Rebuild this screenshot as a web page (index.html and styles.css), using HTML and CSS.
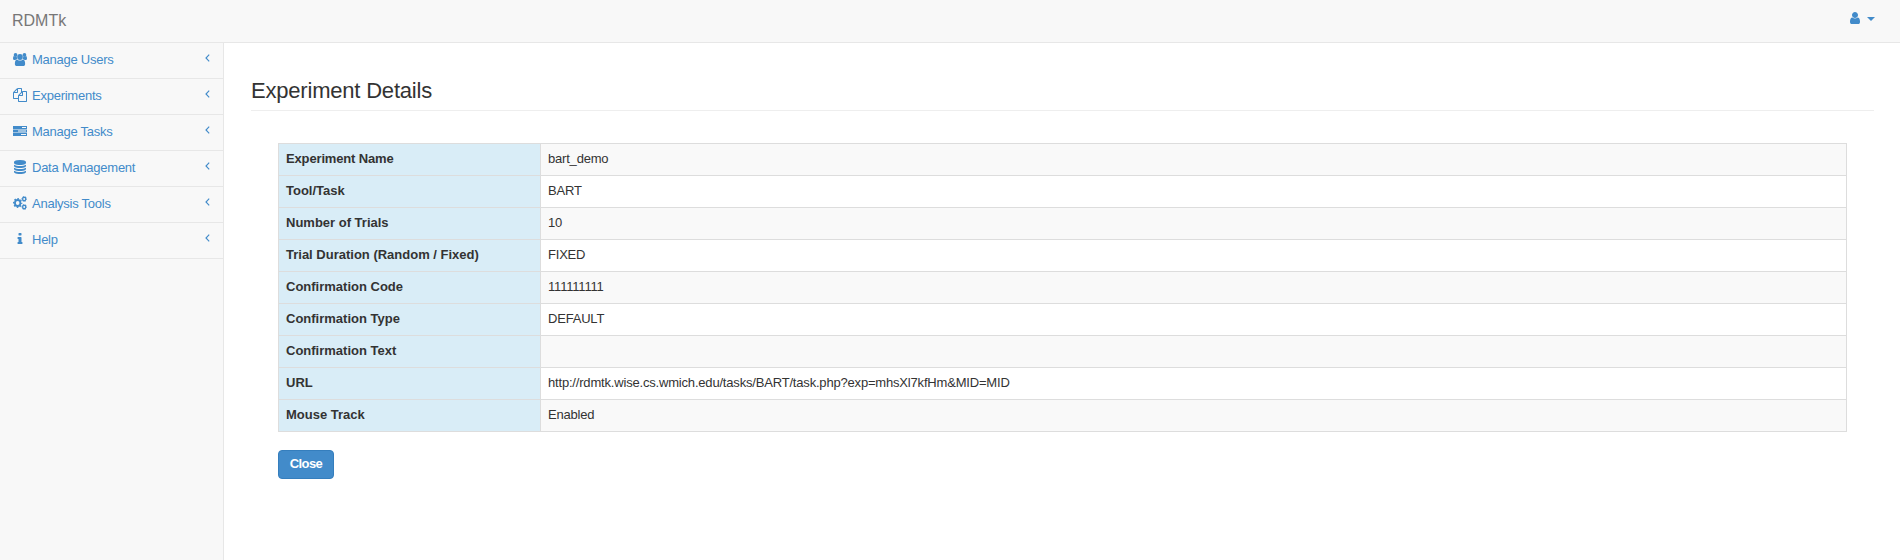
FILE: index.html
```
<!DOCTYPE html>
<html lang="en">
<head>
<meta charset="utf-8">
<title>RDMTk</title>
<link rel="stylesheet" href="styles.css">
</head>
<body>
<svg class="defs" width="0" height="0">
  <symbol id="chevron" viewBox="0 0 5 8"><path d="M4.200.700 1 4l3.200 3.300" fill="none" stroke="currentColor" stroke-width="1.150"/></symbol>
</svg>
<header class="navbar">
  <a class="brand">RDMTk</a>
  <a class="account">
    <svg class="icon-user" viewBox="256 128 1280 1536"><path d="M1536 1399q0 109-62.500 187t-150.500 78h-854q-88 0-150.500-78t-62.500-187q0-85 8.500-160.500t31.500-152 58.500-131 94-89 134.500-34.500q131 128 313 128t313-128q76 0 134.500 34.500t94 89 58.500 131 31.500 152 8.500 160.500zm-256-887q0 159-112.500 271.500t-271.500 112.500-271.500-112.500-112.500-271.500 112.500-271.500 271.500-112.500 271.500 112.500 112.500 271.500z"/></svg>
    <svg class="icon-caret" viewBox="0 0 8 4"><path d="M0 0h8L4 4z"/></svg>
  </a>
</header>
<div class="layout">
  <nav class="sidebar">
    <a class="item">
      <svg class="icon" viewBox="0 0 1920 1792" preserveAspectRatio="none"><circle cx="350" cy="384" r="256"/><circle cx="1570" cy="384" r="256"/><circle cx="960" cy="640" r="384"/><path d="M593 896q-162 5-265 128H194Q0 1020 0 865q0-353 124-353 30 30 115 62t145 32q75 0 149-26-5 42-5 60 0 136 65 256zM1327 896q162 5 265 128h134q194-4 194-159 0-353-124-353-30 30-115 62t-145 32q-75 0-149-26 5 42 5 60 0 136-65 256zM1664 1533q0 120-73 189t-194 70H523q-121 0-194-70t-73-189q0-570 312-573 30 20 84 53 130 75 308 75t308-75q54-33 84-53 312 3 312 573z"/></svg>
      <span class="label">Manage Users</span><svg class="arrow"><use href="#chevron"/></svg>
    </a>
    <a class="item">
      <svg class="icon" viewBox="0 0 1792 1792"><path d="M1696 384q40 0 68 28t28 68v1216q0 40-28 68t-68 28h-960q-40 0-68-28t-28-68v-288h-544q-40 0-68-28t-28-68v-672q0-40 20-88t48-76l408-408q28-28 76-48t88-20h416q40 0 68 28t28 68v328q68-40 128-40h416zm-544 213l-299 299h299v-299zm-640-384l-299 299h299v-299zm196 647l316-316v-416h-384v416q0 40-28 68t-68 28h-416v640h512v-256q0-40 20-88t48-76zm956 804v-1152h-384v416q0 40-28 68t-68 28h-416v640h896z"/></svg>
      <span class="label">Experiments</span><svg class="arrow"><use href="#chevron"/></svg>
    </a>
    <a class="item">
      <svg class="icon" viewBox="0 0 14 14"><path fill-rule="evenodd" d="M0 2h14v3H0zM9 3v1h4V3zM0 5.500h14v3H0zM5 6.500v1h8v-1zM0 9h14v3H0zM8 10v1h5v-1z"/></svg>
      <span class="label">Manage Tasks</span><svg class="arrow"><use href="#chevron"/></svg>
    </a>
    <a class="item">
      <svg class="icon" viewBox="0 0 1792 1792"><path d="M896 768q237 0 443-43t325-127v170q0 69-103 128t-280 93.500-385 34.500-385-34.500-280-93.500-103-128v-170q119 84 325 127t443 43zm0 768q237 0 443-43t325-127v170q0 69-103 128t-280 93.500-385 34.500-385-34.500-280-93.500-103-128v-170q119 84 325 127t443 43zm0-384q237 0 443-43t325-127v170q0 69-103 128t-280 93.500-385 34.500-385-34.500-280-93.500-103-128v-170q119 84 325 127t443 43zm0-1152q208 0 385 34.500t280 93.500 103 128v128q0 69-103 128t-280 93.500-385 34.500-385-34.500-280-93.500-103-128v-128q0-69 103-128t280-93.500 385-34.500z"/></svg>
      <span class="label">Data Management</span><svg class="arrow"><use href="#chevron"/></svg>
    </a>
    <a class="item">
      <svg class="icon" viewBox="0 0 1920 1792" preserveAspectRatio="none"><g fill="none" stroke="currentColor"><circle cx="640" cy="896" r="375" stroke-width="250"/><circle cx="640" cy="896" r="550" stroke-width="180" stroke-dasharray="216" stroke-dashoffset="108"/><circle cx="1536" cy="384" r="220" stroke-width="180"/><circle cx="1536" cy="384" r="320" stroke-width="120" stroke-dasharray="167.500" stroke-dashoffset="84"/><circle cx="1536" cy="1408" r="220" stroke-width="180"/><circle cx="1536" cy="1408" r="320" stroke-width="120" stroke-dasharray="167.500" stroke-dashoffset="84"/></g></svg>
      <span class="label">Analysis Tools</span><svg class="arrow"><use href="#chevron"/></svg>
    </a>
    <a class="item">
      <svg class="icon" viewBox="0 0 1792 1792"><path d="M1216 1344v128q0 26-19 45t-45 19h-512q-26 0-45-19t-19-45v-128q0-26 19-45t45-19h64v-384h-64q-26 0-45-19t-19-45v-128q0-26 19-45t45-19h384q26 0 45 19t19 45v576h64q26 0 45 19t19 45zm-128-1152v192q0 26-19 45t-45 19h-256q-26 0-45-19t-19-45v-192q0-26 19-45t45-19h256q26 0 45 19t19 45z"/></svg>
      <span class="label">Help</span><svg class="arrow"><use href="#chevron"/></svg>
    </a>
  </nav>
  <main class="content">
    <h1 class="title">Experiment Details</h1>
    <section class="panel">
      <table class="details">
        <tr><th class="tight">Experiment Name</th><td>bart_demo</td></tr>
        <tr><th>Tool/Task</th><td>BART</td></tr>
        <tr><th>Number of Trials</th><td>10</td></tr>
        <tr><th>Trial Duration (Random / Fixed)</th><td>FIXED</td></tr>
        <tr><th>Confirmation Code</th><td>111111111</td></tr>
        <tr><th>Confirmation Type</th><td>DEFAULT</td></tr>
        <tr><th>Confirmation Text</th><td></td></tr>
        <tr><th>URL</th><td class="url">http://rdmtk.wise.cs.wmich.edu/tasks/BART/task.php?exp=mhsXl7kfHm&amp;MID=MID</td></tr>
        <tr><th>Mouse Track</th><td>Enabled</td></tr>
      </table>
      <button class="close">Close</button>
    </section>
  </main>
</div>
</body>
</html>
```
FILE: styles.css
```
* { box-sizing: border-box; }
body {
  margin: 0;
  height: 560px;
  overflow: hidden;
  display: flex;
  flex-direction: column;
  background: #fff;
  color: #333;
  font: 13px/18px "Liberation Sans", Arial, sans-serif;
}
svg { display: block; fill: currentColor; }
.defs { position: absolute; }
.navbar {
  flex: none;
  height: 43px;
  display: flex;
  justify-content: space-between;
  padding: 0 25px 0 12px;
  background: #f8f8f8;
  border-bottom: 1px solid #e7e7e7;
}
.brand { padding-top: 11px; font-size: 16px; line-height: 20px; color: #777; }
.account { display: flex; gap: 7px; padding-top: 12px; color: #428bca; }
.icon-user { width: 10px; height: 12px; }
.icon-caret { width: 8px; height: 4px; margin-top: 5px; }
.layout { flex: 1; display: flex; }
.sidebar {
  flex: none;
  width: 224px;
  background: #f8f8f8;
  border-right: 1px solid #e7e7e7;
}
.item {
  display: flex;
  height: 36px;
  padding: 8px 13px 0;
  border-bottom: 1px solid #e7e7e7;
  color: #428bca;
}
.icon { width: 14px; height: 14px; margin: 1px 5px 0 0; }
.arrow { width: 5px; height: 8px; margin: 3px 0 0 auto; }
.label { white-space: nowrap; letter-spacing: -0.25px; }
.content { flex: 1; padding: 33px 26px 0 27px; }
.title {
  height: 35px;
  margin: 0;
  padding-top: 1px;
  border-bottom: 1px solid #eee;
  font-size: 22px;
  font-weight: 400;
  line-height: 28px;
  letter-spacing: -0.2px;
}
.panel { padding: 32px 27px 0; }
.details { width: 1569px; border-collapse: collapse; table-layout: fixed; }
.details th, .details td {
  height: 32px;
  padding: 0 7px 2px;
  border: 1px solid #ddd;
  text-align: left;
  white-space: nowrap;
}
.details th { width: 262px; background: #d9edf7; }
.details .tight { letter-spacing: -0.15px; }
.details td { letter-spacing: -0.2px; }
.details .url { letter-spacing: -0.185px; }
.details tr:nth-child(odd) td { background: #f9f9f9; }
.close {
  display: block;
  width: 56px;
  height: 29px;
  margin-top: 18px;
  padding: 0 0 2px;
  border: 1px solid #357ebd;
  border-radius: 4px;
  background: #428bca;
  color: #fff;
  font: bold 13px/18px "Liberation Sans", Arial, sans-serif;
  letter-spacing: -0.6px;
}
```
